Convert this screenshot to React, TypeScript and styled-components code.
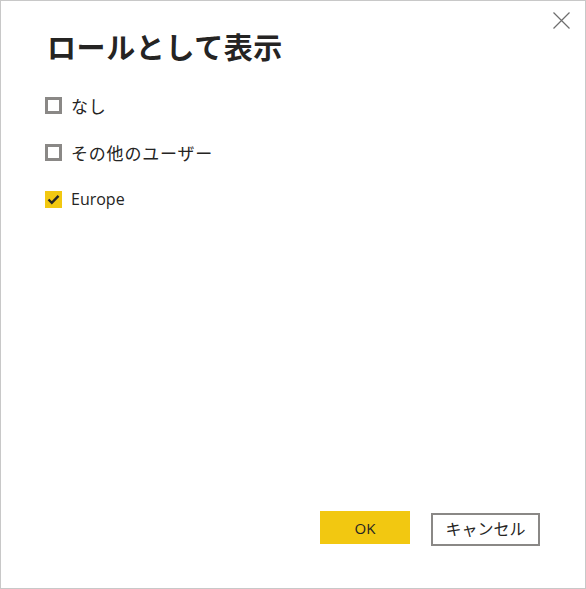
import React from "react";
import styled, { createGlobalStyle } from "styled-components";

const Global = createGlobalStyle`
  html, body { margin: 0; padding: 0; background: #fff; }
  * { box-sizing: border-box; }
`;

const Dialog = styled.div`
  width: 586px;
  height: 589px;
  border: 1px solid #c8c8c8;
  background: #fff;
  display: flex;
  flex-direction: column;
  font-family: "Open Sans", "Noto Sans CJK JP", sans-serif;
  color: #252423;
`;

const Header = styled.div`
  display: flex;
  justify-content: space-between;
  align-items: flex-start;
  padding: 11px 15px 0 46px;
`;

const Title = styled.h1`
  margin: 16px 0 0 0;
  font-family: "Noto Sans CJK JP", sans-serif;
  font-size: 29px;
  line-height: 36px;
  font-weight: 700;
  letter-spacing: 0.6px;
  color: #252423;
`;

const CloseButton = styled.button`
  width: 17px;
  height: 17px;
  padding: 0;
  border: none;
  background: transparent;
  display: flex;
  cursor: pointer;
`;

const OptionList = styled.div`
  display: flex;
  flex-direction: column;
  gap: 30px;
  margin-top: 33px;
  padding-left: 44px;
`;

const Option = styled.label`
  display: flex;
  align-items: center;
  gap: 9px;
  height: 17px;
  cursor: pointer;
`;

const Box = styled.span<{ $checked: boolean }>`
  width: 17px;
  height: 17px;
  flex: none;
  display: flex;
  align-items: center;
  justify-content: center;
  background: ${(p) => (p.$checked ? "#f2c811" : "#fff")};
  border: ${(p) => (p.$checked ? "none" : "3px solid #8a8886")};
`;

const Label = styled.span<{ $jp?: boolean }>`
  font-family: ${(p) => (p.$jp ? '"Noto Sans CJK JP", sans-serif' : '"Open Sans", sans-serif')};
  font-size: ${(p) => (p.$jp ? "17px" : "16px")};
  letter-spacing: ${(p) => (p.$jp ? "0.8px" : "0")};
  line-height: 17px;
  color: #252423;
`;

const Footer = styled.div`
  margin-top: auto;
  display: flex;
  justify-content: flex-end;
  align-items: flex-start;
  gap: 21px;
  padding: 0 45px 42px 0;
`;

const PrimaryButton = styled.button`
  width: 90px;
  height: 33px;
  border: none;
  background: #f2c811;
  color: #252423;
  font-family: "Open Sans", sans-serif;
  font-size: 15px;
  padding: 0;
`;

const SecondaryButton = styled.button`
  margin-top: 2px;
  width: 109px;
  height: 33px;
  border: 2px solid #8a8886;
  background: #fff;
  color: #252423;
  font-family: "Noto Sans CJK JP", sans-serif;
  font-size: 16px;
  line-height: 20px;
  padding: 0 0 3px 0;
`;

const options = [
  { label: "なし", jp: true, checked: false },
  { label: "その他のユーザー", jp: true, checked: false },
  { label: "Europe", jp: false, checked: true },
];

export default function App() {
  return (
    <>
      <Global />
      <Dialog>
        <Header>
          <Title>ロールとして表示</Title>
          <CloseButton aria-label="閉じる">
            <svg width="17" height="17" viewBox="0 0 17 17">
              <path d="M0.5 0.5 L16.5 16.5 M16.5 0.5 L0.5 16.5" stroke="#6e6e6e" strokeWidth="1.2" fill="none" />
            </svg>
          </CloseButton>
        </Header>
        <OptionList>
          {options.map((o) => (
            <Option key={o.label}>
              <Box $checked={o.checked}>
                {o.checked && (
                  <svg width="13" height="11" viewBox="0 0 13 11">
                    <path d="M1.5 5.5 L4.8 8.8 L11.5 1.8" stroke="#252423" strokeWidth="2.4" fill="none" />
                  </svg>
                )}
              </Box>
              <Label $jp={o.jp}>{o.label}</Label>
            </Option>
          ))}
        </OptionList>
        <Footer>
          <PrimaryButton>OK</PrimaryButton>
          <SecondaryButton>キャンセル</SecondaryButton>
        </Footer>
      </Dialog>
    </>
  );
}
